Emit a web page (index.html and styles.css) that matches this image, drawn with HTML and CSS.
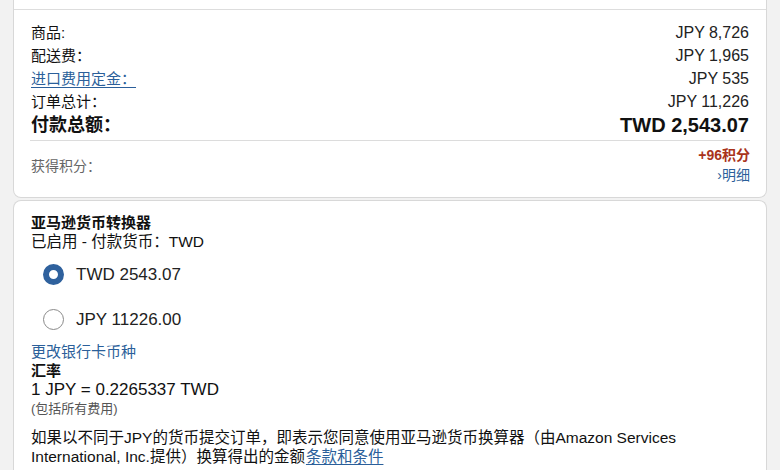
FILE: index.html
```html
<!DOCTYPE html>
<html lang="zh-CN">
<head>
<meta charset="utf-8">
<link rel="stylesheet" href="styles.css">
</head>
<body>
<div class="page">
  <section class="card card-summary">
    <div class="card-top"></div>
    <div class="summary">
      <div class="row"><span class="lbl">商品:</span><span class="amt">JPY 8,726</span></div>
      <div class="row"><span class="lbl">配送费：</span><span class="amt">JPY 1,965</span></div>
      <div class="row"><a class="link lbl" href="#">进口费用定金：</a><span class="amt">JPY 535</span></div>
      <div class="row"><span class="lbl">订单总计：</span><span class="amt">JPY 11,226</span></div>
      <div class="row row-total"><span>付款总额：</span><span class="amt">TWD 2,543.07</span></div>
    </div>
    <div class="points">
      <span class="points-label">获得积分：</span>
      <div class="points-right">
        <span class="points-val">+96积分</span>
        <a class="link small-link" href="#">›明细</a>
      </div>
    </div>
  </section>

  <section class="card card-converter">
    <h2 class="conv-title">亚马逊货币转换器</h2>
    <div class="conv-sub">已启用 - 付款货币：TWD</div>
    <div class="radio-row"><span class="radio radio-on"></span><span class="radio-label">TWD 2543.07</span></div>
    <div class="radio-row"><span class="radio"></span><span class="radio-label">JPY 11226.00</span></div>
    <a class="link block" href="#">更改银行卡币种</a>
    <div class="rate-title">汇率</div>
    <div class="rate">1 JPY = 0.2265337 TWD</div>
    <div class="note">(包括所有费用)</div>
    <p class="terms">如果以不同于JPY的货币提交订单，即表示您同意使用亚马逊货币换算器（由Amazon Services International, Inc.提供）换算得出的金额<a class="link under" href="#">条款和条件</a></p>
  </section>
</div>
</body>
</html>
```

FILE: styles.css
```css
* { box-sizing: border-box; }
html, body { margin: 0; padding: 0; }
body {
  background: #f2f2f2;
  font-family: "Liberation Sans", "Noto Sans CJK SC", sans-serif;
  color: #111;
  font-size: 16px;
  overflow: hidden;
}
.page { padding: 0 13px; }
.card {
  background: #fff;
  border: 1px solid #d8d8d8;
}
.card-summary {
  border-top: none;
  border-radius: 0 0 8px 8px;
}
.card-top {
  height: 10px;
  border-bottom: 1px solid #dddddd;
}
.summary {
  padding: 11px 17px 2px;
}
.row {
  display: flex;
  justify-content: space-between;
  align-items: center;
  line-height: 23px;
  height: 23px;
}
.lbl { font-size: 15px; }
.amt { color: #222; }
.row-total {
  height: 25px;
  font-weight: bold;
  font-size: 18px;
  margin-top: 0;
}
.row-total .amt { font-size: 20px; color: #111; }
.link { color: #2b5f9a; text-decoration: none; }
.summary .link { text-decoration: underline; text-underline-offset: 3px; }
.points {
  margin: 0 16px;
  border-top: 1px solid #dcdcdc;
  display: flex;
  justify-content: space-between;
  align-items: center;
  padding: 4px 0 12px 1px;
}
.points-label { color: #666; font-size: 14px; }
.points-right {
  display: flex;
  flex-direction: column;
  align-items: flex-end;
  font-size: 14px;
  line-height: 20px;
}
.points-val { color: #a9331a; font-weight: bold; }
.card-converter {
  margin-top: 2px;
  border-radius: 8px 8px 0 0;
  border-bottom: none;
  padding: 12px 17px 0;
  height: 280px;
}
.conv-title {
  margin: 0;
  font-size: 15px;
  font-weight: bold;
  line-height: 19px;
}
.conv-sub { line-height: 19px; font-size: 15.5px; margin-bottom: 1px; }
.radio-row {
  display: flex;
  align-items: center;
  height: 45px;
  padding-left: 12px;
}
.radio {
  width: 21px;
  height: 21px;
  border-radius: 50%;
  border: 1px solid #8a8a8a;
  background: #fff;
  margin-right: 12px;
  flex: none;
}
.radio-on {
  border: 6px solid #2f619d;
  background: #fff;
}
.radio-label { font-size: 17px; color: #222; }
.block { display: block; }
.card-converter .block { line-height: 19px; margin-top: 0; font-size: 15px; }
.rate-title { font-weight: bold; line-height: 19px; font-size: 15px; }
.rate { line-height: 19px; font-size: 17px; }
.note { line-height: 19px; font-size: 13px; color: #555; }
.terms {
  margin: 10px 0 0;
  line-height: 19px;
  font-size: 15.5px;
}
.under { text-decoration: underline; text-underline-offset: 2px; margin-left: 1px; }
```
